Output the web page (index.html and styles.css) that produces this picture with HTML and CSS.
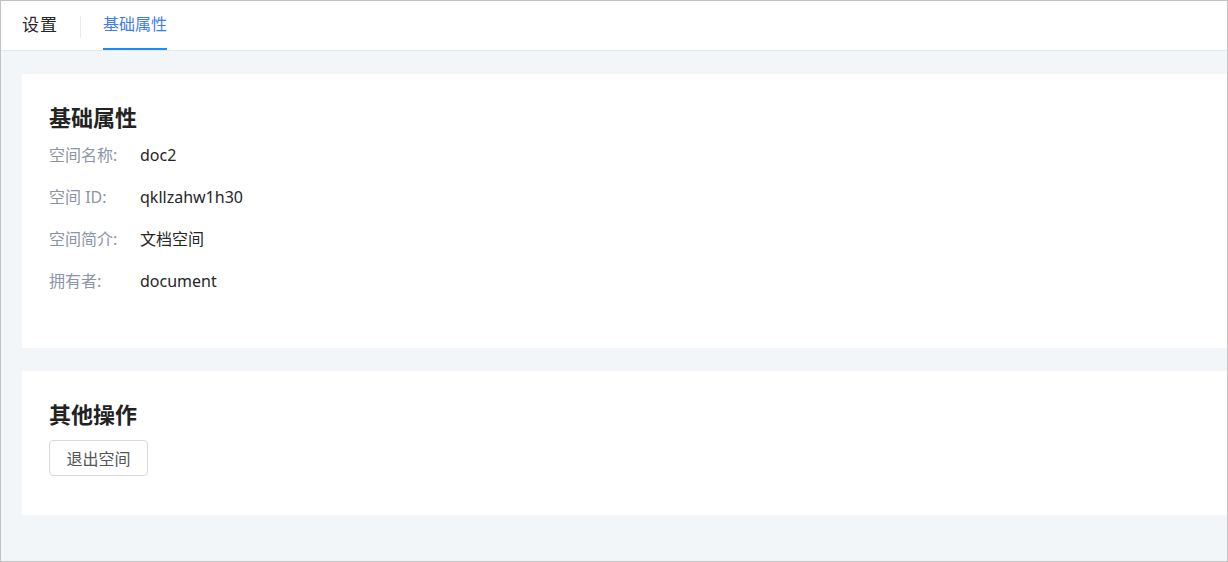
FILE: index.html
```html
<!DOCTYPE html>
<html lang="zh">
<head>
<meta charset="utf-8">
<title>基础属性</title>
<link rel="stylesheet" href="styles.css">
</head>
<body>
<div class="frame">
  <header class="tabs">
    <div class="tab first">设置</div>
    <div class="divider"></div>
    <div class="tab active">基础属性</div>
  </header>
  <main class="content">
    <section class="card card-info">
      <h2 class="card-title">基础属性</h2>
      <div class="rows">
        <div class="row"><span class="label">空间名称:</span><span class="value">doc2</span></div>
        <div class="row"><span class="label">空间 ID:</span><span class="value">qkllzahw1h30</span></div>
        <div class="row"><span class="label">空间简介:</span><span class="value">文档空间</span></div>
        <div class="row"><span class="label">拥有者:</span><span class="value">document</span></div>
      </div>
    </section>
    <section class="card card-ops">
      <h2 class="card-title">其他操作</h2>
      <button class="btn">退出空间</button>
    </section>
  </main>
</div>
</body>
</html>
```
FILE: styles.css
```css
* { box-sizing: border-box; }
html, body { margin: 0; padding: 0; }
body {
  font-family: "Noto Sans", "Noto Sans CJK SC", sans-serif;
  color: #262626;
}
.frame {
  width: 1228px;
  height: 562px;
  border: 1px solid #c2c2c2;
  background: #f3f6f9;
  display: flex;
  flex-direction: column;
}
.tabs {
  height: 50px;
  background: #fff;
  border-bottom: 1px solid #e6e7f0;
  display: flex;
  align-items: stretch;
  padding-left: 21px;
}
.tab {
  font-size: 16px;
  line-height: 47px;
  color: #262626;
  border-bottom: 2px solid transparent;
}
.tab.first {
  font-size: 17px;
  letter-spacing: 1px;
}
.tab.active {
  color: #3f7cf4;
  border-bottom-color: #1b8cff;
}
.divider {
  width: 1px;
  background: #ebebeb;
  margin: 15px 22px 12px 22px;
}
.content {
  flex: 1;
  padding: 23px 0 0 21px;
  display: flex;
  flex-direction: column;
  gap: 23px;
}
.card {
  background: #fff;
  padding: 28px 27px;
}
.card-title {
  margin: 0;
  font-size: 22px;
  line-height: 30px;
  font-weight: 700;
  color: #222;
}
.card-info { padding-bottom: 36px; }
.rows { margin-top: 12px; }
.row {
  display: flex;
  font-size: 16px;
  line-height: 22px;
  padding-bottom: 20px;
}
.label {
  width: 91px;
  color: #8b95a5;
}
.value { color: #262626; }
.card-ops { padding-bottom: 39px; }
.btn {
  margin-top: 11px;
  width: 99px;
  height: 36px;
  border: 1px solid #d9d9d9;
  border-radius: 4px;
  background: #fff;
  font-family: inherit;
  font-size: 16px;
  color: #555;
  padding: 0;
  display: block;
}
```
